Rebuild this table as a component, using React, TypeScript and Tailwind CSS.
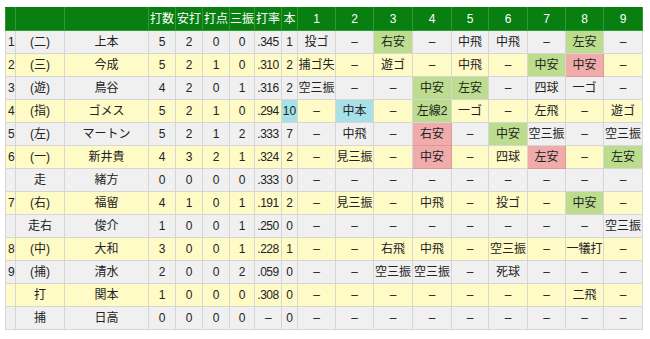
type Mark = "g" | "p" | "b" | undefined;

type Row = {
  order: string;
  pos: string;
  name: string;
  stats: string[];
  hr: string;
  hrMark?: Mark;
  innings: string[];
};

const D = "–";

// g: 安打, p: 打点付き安打, b: 本塁打
const rows: Row[] = [
  { order: "1", pos: "(二)", name: "上本", stats: ["5", "2", "0", "0", ".345"], hr: "1", innings: ["投ゴ", D, "右安:g", D, "中飛", "中飛", D, "左安:g", D] },
  { order: "2", pos: "(三)", name: "今成", stats: ["5", "2", "1", "0", ".310"], hr: "2", innings: ["捕ゴ失", D, "遊ゴ", D, "中飛", D, "中安:g", "中安:p", D] },
  { order: "3", pos: "(遊)", name: "鳥谷", stats: ["4", "2", "0", "1", ".316"], hr: "2", innings: ["空三振", D, D, "中安:g", "左安:g", D, "四球", "一ゴ", D] },
  { order: "4", pos: "(指)", name: "ゴメス", stats: ["5", "2", "1", "0", ".294"], hr: "10", hrMark: "b", innings: [D, "中本:b", D, "左線2:g", "一ゴ", D, "左飛", D, "遊ゴ"] },
  { order: "5", pos: "(左)", name: "マートン", stats: ["5", "2", "1", "2", ".333"], hr: "7", innings: [D, "中飛", D, "右安:p", D, "中安:g", "空三振", D, "空三振"] },
  { order: "6", pos: "(一)", name: "新井貴", stats: ["4", "3", "2", "1", ".324"], hr: "2", innings: [D, "見三振", D, "中安:p", D, "四球", "左安:p", D, "左安:g"] },
  { order: "", pos: "走", name: "緒方", stats: ["0", "0", "0", "0", ".333"], hr: "0", innings: [D, D, D, D, D, D, D, D, D] },
  { order: "7", pos: "(右)", name: "福留", stats: ["4", "1", "0", "1", ".191"], hr: "2", innings: [D, "見三振", D, "中飛", D, "投ゴ", D, "中安:g", D] },
  { order: "", pos: "走右", name: "俊介", stats: ["1", "0", "0", "1", ".250"], hr: "0", innings: [D, D, D, D, D, D, D, D, "空三振"] },
  { order: "8", pos: "(中)", name: "大和", stats: ["3", "0", "0", "1", ".228"], hr: "1", innings: [D, D, "右飛", "中飛", D, "空三振", D, "一犠打", D] },
  { order: "9", pos: "(捕)", name: "清水", stats: ["2", "0", "0", "2", ".059"], hr: "0", innings: [D, D, "空三振", "空三振", D, "死球", D, D, D] },
  { order: "", pos: "打", name: "関本", stats: ["1", "0", "0", "0", ".308"], hr: "0", innings: [D, D, D, D, D, D, D, "二飛", D] },
  { order: "", pos: "捕", name: "日高", stats: ["0", "0", "0", "0", D], hr: "0", innings: [D, D, D, D, D, D, D, D, D] },
];

const colWidths = [10, 49, 84, 27, 27, 27, 25, 27, 16, 38, 38, 39, 39, 37, 39, 38, 38, 39];

const markClass = (m: Mark) => {
  if (m === "g") return "bg-[#bcdd8e] border-[#a9cf78]";
  if (m === "p") return "bg-[#f0abab] border-[#e29696]";
  if (m === "b") return "bg-[#a8e0e8] border-[#8ccfd9]";
  return "";
};

function Cell({ text, mark, className = "" }: { text: string; mark?: Mark; className?: string }) {
  return (
    <td className={`h-[23px] p-0 border border-[#d6d6d6] text-center whitespace-nowrap ${markClass(mark)} ${className}`}>
      {text}
    </td>
  );
}

function App() {
  const heads = ["", "", "", "打数", "安打", "打点", "三振", "打率", "本", "1", "2", "3", "4", "5", "6", "7", "8", "9"];

  return (
    <div className="w-[650px] h-[339px] bg-white pt-[7px] pl-[5px] text-[12px] text-[#222] [font-family:'Liberation_Sans','Noto_Sans_CJK_JP',sans-serif]">
      <table className="table-fixed border-collapse w-[637px]">
        <colgroup>
          {colWidths.map((w, i) => (
            <col key={i} style={{ width: w }} />
          ))}
        </colgroup>
        <thead>
          <tr className="bg-[#087f10] text-white">
            {heads.map((h, i) => (
              <th key={i} className="h-[23px] p-0 font-normal border border-[#2f9a35] border-t-[#087f10] text-center whitespace-nowrap">
                {h}
              </th>
            ))}
          </tr>
        </thead>
        <tbody>
          {rows.map((r, i) => (
            <tr key={i} className={i % 2 === 0 ? "bg-[#f0f0f0]" : "bg-[#fffbc6]"}>
              <Cell text={r.order} className="text-left pl-[2px]" />
              <Cell text={r.pos} />
              <Cell text={r.name} />
              {r.stats.map((s, j) => (
                <Cell key={j} text={s} className={j === 4 ? "tracking-[-0.5px]" : ""} />
              ))}
              <Cell text={r.hr} mark={r.hrMark} />
              {r.innings.map((inn, j) => {
                const [t, m] = inn.split(":");
                return <Cell key={j} text={t} mark={m as Mark} />;
              })}
            </tr>
          ))}
        </tbody>
      </table>
    </div>
  );
}

export default App;
